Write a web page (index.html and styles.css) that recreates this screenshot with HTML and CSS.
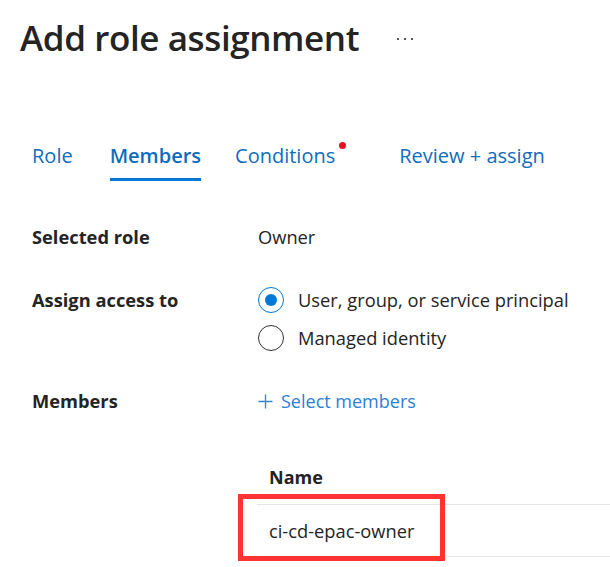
FILE: index.html
```html
<!DOCTYPE html>
<html lang="en">
<head>
<meta charset="utf-8">
<title>Add role assignment</title>
<link rel="stylesheet" href="styles.css">
</head>
<body>
<div class="page">
  <header class="header">
    <h1 class="title">Add role assignment</h1>
    <span class="more" aria-label="More"><i></i><i></i><i></i></span>
  </header>

  <nav class="tabs">
    <a class="tab tab-role">Role</a>
    <a class="tab tab-members active">Members</a>
    <a class="tab tab-conditions">Conditions<span class="dot"></span></a>
    <a class="tab tab-review">Review + assign</a>
  </nav>

  <div class="form">
    <div class="label row-1">Selected role</div>
    <div class="value row-1">Owner</div>

    <div class="label row-2">Assign access to</div>
    <div class="value row-2 radios">
      <label class="radio"><span class="circle checked"></span><span>User, group, or service principal</span></label>
      <label class="radio"><span class="circle"></span><span>Managed identity</span></label>
    </div>

    <div class="label row-3">Members</div>
    <div class="value row-3">
      <a class="select-link">
        <svg class="plus" width="15" height="15" viewBox="0 0 15 15"><path d="M7.5 0.5V14.5M0.5 7.5H14.5" stroke="currentColor" stroke-width="1.3" fill="none"/></svg>
        <span>Select members</span>
      </a>
    </div>

    <div class="value row-4 table">
      <div class="th">Name</div>
      <div class="tr">
        <div class="td">ci-cd-epac-owner</div>
        <div class="highlight"></div>
      </div>
    </div>
  </div>
</div>
</body>
</html>
```

FILE: styles.css
```css
* { box-sizing: border-box; }
html, body { margin: 0; padding: 0; background: #fff; }
body {
  font-family: "Open Sans", "Noto Sans", sans-serif;
  color: #242424;
  overflow: hidden;
}
.page { width: 610px; height: 567px; overflow: hidden; }

.header {
  height: 75px;
  display: flex;
  align-items: center;
  padding-left: 20px;
}
.title {
  margin: 0;
  font-size: 35px;
  font-weight: 600;
  line-height: 44px;
  letter-spacing: -0.4px;
  color: #242424;
}
.more {
  display: flex;
  gap: 5px;
  margin-left: 38px;
  margin-top: 2px;
}
.more i { width: 2px; height: 2px; background: #555; display: block; }

.tabs {
  margin-top: 69px;
  display: flex;
  padding-left: 32px;
  font-size: 20px;
  line-height: 24px;
}
.tab {
  color: #0f6cbd;
  position: relative;
  padding-bottom: 10px;
  border-bottom: 3px solid transparent;
  white-space: nowrap;
}
.tab.active { border-bottom-color: #0078d4; font-weight: 600; color: #0f6cbd; }
.tab-members { margin-left: 37px; }
.tab-conditions { margin-left: 34px; }
.tab-review { margin-left: 64px; }
.dot {
  position: absolute;
  right: -11px;
  top: -2px;
  width: 7px;
  height: 7px;
  border-radius: 50%;
  background: #e81123;
}

.form {
  margin-top: 44px;
  display: grid;
  grid-template-columns: 226px 1fr;
  padding-left: 32px;
  font-size: 18.3px;
  line-height: 24px;
}
.label { font-weight: 700; color: #242424; }
.value { color: #242424; }
.row-2 { margin-top: 32px; }
.row-3 { margin-top: 32px; }
.label.row-2 { padding-top: 7px; }
.radios { display: flex; flex-direction: column; }
.radio { display: flex; align-items: center; height: 38px; gap: 14px; }
.circle {
  width: 26px;
  height: 26px;
  border-radius: 50%;
  border: 1.5px solid #323130;
  display: flex;
  align-items: center;
  justify-content: center;
  flex: none;
}
.circle.checked { border-color: #0078d4; }
.circle.checked::after {
  content: "";
  width: 12px;
  height: 12px;
  border-radius: 50%;
  background: #0078d4;
}
.select-link { display: flex; align-items: center; gap: 8px; color: #2b7fd4; font-size: 18px; }
.plus { display: block; color: #2b88d8; }

.row-4 { grid-column: 2; margin-top: 52px; }
.table { margin-left: -1px; }
.th {
  font-weight: 700;
  font-size: 18px;
  padding-left: 12px;
  padding-bottom: 15px;
  border-bottom: 1px solid #e6e6e6;
}
.tr { position: relative; border-bottom: 1px solid #e6e6e6; }
.td { padding: 14px 0 13px 12px; font-size: 18.3px; }
.highlight {
  position: absolute;
  left: -19px;
  top: -11px;
  width: 207px;
  height: 67px;
  border: 5px solid #ff3333;
}
```
